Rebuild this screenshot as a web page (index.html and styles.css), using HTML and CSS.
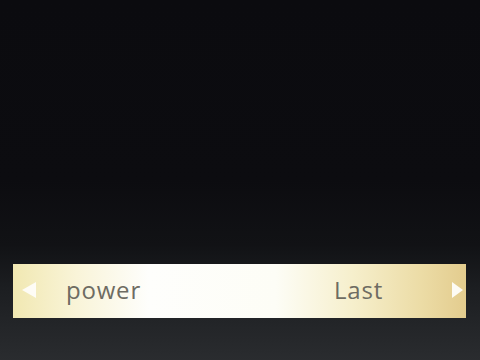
FILE: index.html
```html
<!DOCTYPE html>
<html>
<head>
<meta charset="utf-8">
<link rel="stylesheet" href="styles.css">
</head>
<body>
<div class="screen">
  <div class="bar">
    <svg class="arrow" width="16" height="18" viewBox="0 0 16 18"><polygon points="15,1 15,17 1,9" fill="#ffffff" opacity="0.85"/></svg>
    <span class="label">power</span>
    <span class="value">Last</span>
    <svg class="arrow" width="13" height="18" viewBox="0 0 13 18"><polygon points="1,1 1,17 12,9" fill="#ffffff" opacity="0.9"/></svg>
  </div>
</div>
</body>
</html>
```
FILE: styles.css
```css
html, body {
  margin: 0;
  padding: 0;
  width: 480px;
  height: 360px;
  overflow: hidden;
}
.screen {
  box-sizing: border-box;
  width: 480px;
  height: 360px;
  background:
    linear-gradient(180deg, #0b0b0f 0%, #0c0c10 50%, #111215 68%, #1c1e21 80%, #2a2c2f 100%);
  display: flex;
  flex-direction: column;
  justify-content: flex-end;
  padding: 0 14px 42px 13px;
}
.bar {
  box-sizing: border-box;
  height: 54px;
  display: flex;
  align-items: center;
  background: linear-gradient(90deg, #f1e8b2 0%, #f9f4d8 14%, #fefefc 30%, #fdfdf6 58%, #f6efcc 75%, #ecdca6 90%, #e3cc8e 100%);
  font-family: "Open Sans", "DejaVu Sans", sans-serif;
  font-size: 24px;
  letter-spacing: 0.8px;
  color: #6e6c62;
  padding: 0 2px 3px 8px;
}
.arrow {
  flex: none;
}
.label {
  margin-left: 29px;
  flex: 1;
}
.value {
  margin-right: 68px;
}
```
